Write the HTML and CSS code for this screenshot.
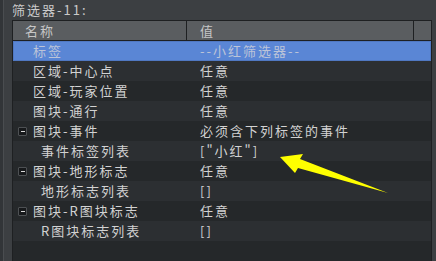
FILE: index.html
```html
<!DOCTYPE html>
<html lang="zh-CN">
<head>
<meta charset="utf-8"/>
<meta content="width=device-width, initial-scale=1.0" name="viewport"/>
<title>筛选器</title>
<link rel="stylesheet" href="styles.css">
</head>
<body>
<div class="panel">
<div class="title">筛选器-11:</div>
<div class="table">
<div class="head">
<div class="cell name">名称</div>
<div class="cell value">值</div>
<div class="cell spare"></div>
</div>
<div class="row selected"><div class="name">标签</div><div class="value">--小红筛选器--</div></div>
<div class="row odd"><div class="name">区域-中心点</div><div class="value">任意</div></div>
<div class="row"><div class="name">区域-玩家位置</div><div class="value">任意</div></div>
<div class="row odd"><div class="name">图块-通行</div><div class="value">任意</div></div>
<div class="row"><div class="name"><span class="toggle"></span>图块-事件</div><div class="value">必须含下列标签的事件</div></div>
<div class="row odd"><div class="name child">事件标签列表</div><div class="value">["小红"]</div></div>
<div class="row"><div class="name"><span class="toggle"></span>图块-地形标志</div><div class="value">任意</div></div>
<div class="row odd"><div class="name child">地形标志列表</div><div class="value">[]</div></div>
<div class="row"><div class="name"><span class="toggle"></span>图块-R图块标志</div><div class="value">任意</div></div>
<div class="row odd"><div class="name child">R图块标志列表</div><div class="value">[]</div></div>
<div class="filler"></div>
</div>
</div>
<svg class="arrow" width="436" height="261" viewBox="0 0 436 261">
<polygon points="280,157 303,154 300,159 388,193 298,168 295,173" fill="#ffff00"/>
</svg>
</body>
</html>
```
FILE: styles.css
```css
html, body {
  margin: 0;
  height: 100%;
}

body {
  background: #3c3f42;
  border-left: 3px solid #323538;
  box-sizing: border-box;
  font-family: "Noto Sans CJK SC", "Noto Sans", sans-serif;
  font-size: 13px;
  letter-spacing: 2px;
  color: #d2d2d2;
  overflow: hidden;
  position: relative;
}

.panel {
  border-left: 1px solid #4a4d50;
  height: 100%;
  display: flex;
  flex-direction: column;
}

.title {
  height: 20px;
  line-height: 20px;
  padding-left: 8px;
  color: #cacaca;
}

.table {
  margin-left: 8px;
  margin-right: 4px;
  flex: 1;
  display: flex;
  flex-direction: column;
  border-left: 1px solid #1e2022;
  border-right: 1px solid #1e2022;
  border-top: 1px solid #1e2022;
  background: #25282a;
}

.head {
  display: flex;
  height: 19px;
  line-height: 19px;
  background: #5a5d60;
  border-bottom: 1px solid #1e2022;
  color: #c6c6c6;
}

.head .cell {
  border-right: 1px solid #1e2022;
}

.head .name {
  width: 161px;
  padding-left: 12px;
}

.head .value {
  width: 213px;
  padding-left: 13px;
}

.head .spare {
  flex: 1;
  border-right: none;
}

.row {
  display: flex;
  height: 20px;
  line-height: 20px;
  background: #25282a;
  white-space: nowrap;
}

.row.odd {
  background: #2c2f32;
}

.row.selected {
  background: #5a86d5;
  box-shadow: inset 0 0 0 1px #5078c2;
  color: #bcc4d8;
}

.row .name {
  width: 154px;
  padding-left: 20px;
  display: flex;
  align-items: center;
  position: relative;
}

.row .name.child {
  padding-left: 28px;
  width: 146px;
}

.row .value {
  padding-left: 13px;
}

.toggle {
  position: absolute;
  left: 5px;
  top: 6px;
  width: 7px;
  height: 7px;
  background: #17191b;
  border: 1px solid #4e5154;
  border-radius: 1px;
}

.toggle::after {
  content: "";
  position: absolute;
  left: 2px;
  top: 3px;
  width: 4px;
  height: 1px;
  background: #d8d8d8;
}

.filler {
  flex: 1;
}

.arrow {
  position: absolute;
  left: -3px;
  top: 0;
  pointer-events: none;
}
```
